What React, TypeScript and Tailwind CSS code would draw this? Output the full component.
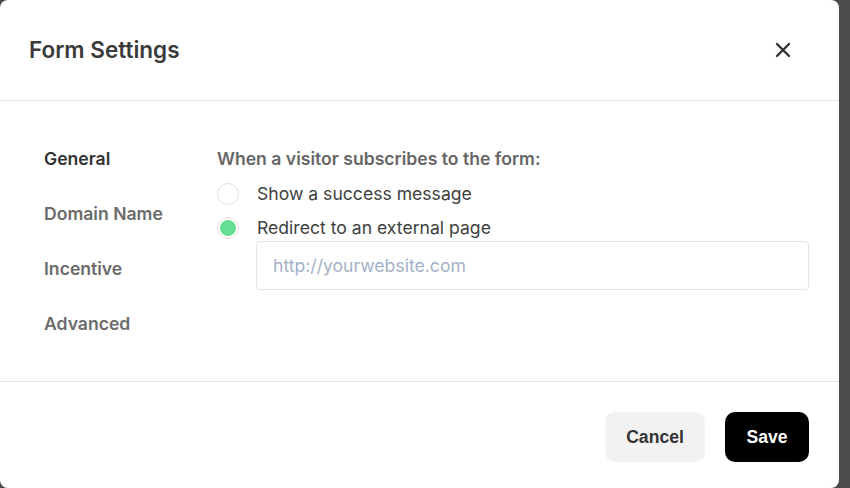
import { useState } from "react";

const tabs = ["General", "Domain Name", "Incentive", "Advanced"];

export default function App() {
  const [active, setActive] = useState("General");
  const [choice, setChoice] = useState("redirect");
  const [url, setUrl] = useState("");

  return (
    <div className="w-[850px] h-[488px] bg-[#4b4b4b] overflow-hidden font-['Inter',sans-serif]">
      <div className="w-[839px] h-[488px] bg-white rounded-lg flex flex-col">
        <div className="h-[101px] flex items-center justify-between pl-[29px] pr-[48px] border-b border-[#e5e5e5]">
          <h1 className="text-[22.5px] font-semibold text-[#3a3a3a]">Form Settings</h1>
          <button className="text-[#333]" aria-label="Close">
            <svg width="16" height="16" viewBox="0 0 16 16" fill="none" stroke="currentColor" strokeWidth="2.4" strokeLinecap="round">
              <path d="M2 2l12 12M14 2L2 14" />
            </svg>
          </button>
        </div>

        <div className="h-[281px] flex pt-[47px] border-b border-[#e5e5e5]">
          <nav className="w-[217px] pl-[44px] -mt-[1px] flex flex-col gap-[32px]">
            {tabs.map(t => (
              <button
                key={t}
                onClick={() => setActive(t)}
                className={`text-left text-[17.6px] font-semibold leading-[23px] ${active === t ? "text-[#333]" : "text-[#6b6b6b]"}`}
              >
                {t}
              </button>
            ))}
          </nav>

          <div className="flex-1 pr-[30px]">
            <p className="text-[17.6px] font-semibold leading-[22px] text-[#666]">When a visitor subscribes to the form:</p>
            <label className="flex items-center gap-[18px] mt-[12px] h-[24px] cursor-pointer" onClick={() => setChoice("success")}>
              <span className="w-[22px] h-[22px] rounded-full border border-[#e0e0e0] flex items-center justify-center">
                {choice === "success" && <span className="w-[16px] h-[16px] rounded-full bg-[#66dd94]" />}
              </span>
              <span className="text-[17.6px] leading-[24px] text-[#404040]">Show a success message</span>
            </label>
            <label className="flex items-center gap-[18px] mt-[10px] h-[24px] cursor-pointer" onClick={() => setChoice("redirect")}>
              <span className="w-[22px] h-[22px] rounded-full border border-[#e0e0e0] flex items-center justify-center">
                {choice === "redirect" && <span className="w-[16px] h-[16px] rounded-full bg-[#66dd94]" />}
              </span>
              <span className="text-[17.6px] leading-[24px] text-[#404040]">Redirect to an external page</span>
            </label>
            <input
              value={url}
              onChange={e => setUrl(e.target.value)}
              placeholder="http://yourwebsite.com"
              className="ml-[39px] mt-[1px] w-[553px] h-[49px] rounded-[4px] border border-[#e5e5e5] px-[16px] text-[17.6px] text-[#333] placeholder:text-[#a3b1c6] focus:outline-none"
            />
          </div>
        </div>

        <div className="flex-1 flex items-start justify-end gap-[20px] pt-[30px] pr-[30px]">
          <button className="w-[100px] h-[50px] rounded-[10px] bg-[#f2f2f2] text-[17.6px] font-bold text-[#333] font-['Liberation_Sans',sans-serif]">
            Cancel
          </button>
          <button className="w-[84px] h-[50px] rounded-[10px] bg-black text-[17.6px] font-bold text-white font-['Liberation_Sans',sans-serif]">
            Save
          </button>
        </div>
      </div>
    </div>
  );
}
